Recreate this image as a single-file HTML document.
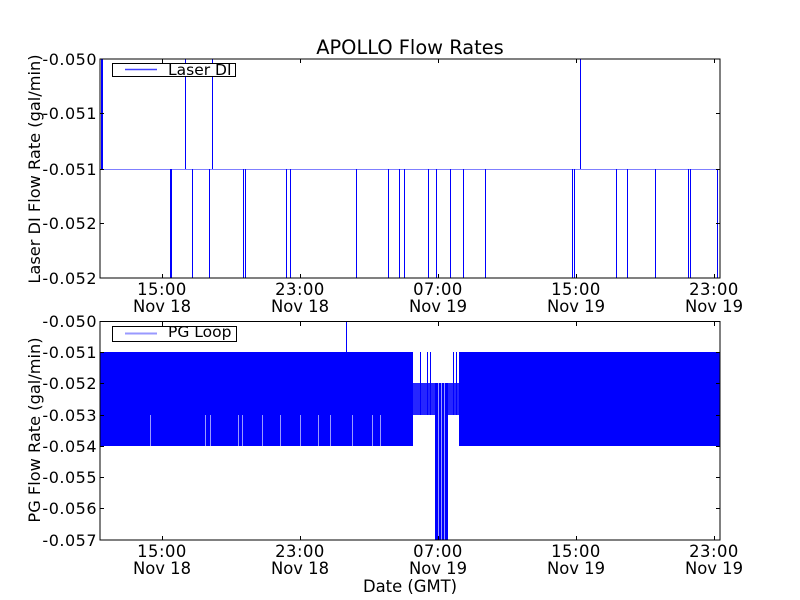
<!DOCTYPE html>
<html><head><meta charset="utf-8"><style>
html,body{margin:0;padding:0;background:#fff;}
svg{display:block;font-family:"DejaVu Sans","Liberation Sans",sans-serif;}
.n{letter-spacing:0.5px;}
</style></head><body>
<svg width="800" height="600" viewBox="0 0 800 600" xmlns="http://www.w3.org/2000/svg">
<rect width="800" height="600" fill="#fff"/>
<text x="410" y="54" font-size="19.4" text-anchor="middle">APOLLO Flow Rates</text>

<!-- TOP AXES -->
<g stroke="#0000ff" stroke-width="1" fill="none">
<line x1="100" y1="169.5" x2="720" y2="169.5" stroke="#7f7fff"/>
<path d="M101.5 169V59M102.5 169V59M185.5 169V59M212.5 169V59M580.5 169V59"/>
<path d="M170.5 169V278M171.5 169V278M192.5 169V278M209.5 169V278M243.5 169V278M245.5 169V278M286.5 169V278M290.5 169V278M356.5 169V278M388.5 169V278M399.5 169V278M404.5 169V278M428.5 169V278M436.5 169V278M450.5 169V278M463.5 169V278M485.5 169V278M572.5 169V278M574.5 169V278M616.5 169V278M627.5 169V278M655.5 169V278M688.5 169V278M690.5 169V278M717.5 169V278"/>
</g>
<rect x="100" y="59" width="620" height="219" fill="none" stroke="#000" stroke-width="1"/>
<g stroke="#000" stroke-width="1">
<path d="M100 113.5h4M100 169.5h4M100 223.5h4M716 113.5h4M716 169.5h4M716 223.5h4"/>
<path d="M162.5 278v-4M300.5 278v-4M438.5 278v-4M576.5 278v-4M714.5 278v-4M162.5 59v4M300.5 59v4M438.5 59v4M576.5 59v4M714.5 59v4"/>
</g>
<rect x="112.5" y="63.5" width="123" height="13" fill="#fff" stroke="#000"/>
<line x1="125" y1="69.5" x2="157" y2="69.5" stroke="#4040ff" stroke-width="1.5"/>
<text x="168" y="75" font-size="15.5">Laser DI</text>
<g font-size="16" text-anchor="end" class="n">
<text x="97" y="65">-0.050</text>
<text x="97" y="119">-0.051</text>
<text x="97" y="175">-0.051</text>
<text x="97" y="229">-0.052</text>
<text x="97" y="284">-0.052</text>
</g>
<g font-size="16.4" text-anchor="middle">
<text x="162" y="295" class="n">15:00</text><text x="162" y="312">Nov 18</text>
<text x="300" y="295" class="n">23:00</text><text x="300" y="312">Nov 18</text>
<text x="438" y="295" class="n">07:00</text><text x="438" y="312">Nov 19</text>
<text x="576" y="295" class="n">15:00</text><text x="576" y="312">Nov 19</text>
<text x="714" y="295" class="n">23:00</text><text x="714" y="312">Nov 19</text>
</g>
<text transform="translate(40,169) rotate(-90)" font-size="16.2" text-anchor="middle">Laser DI Flow Rate (gal/min)</text>

<!-- BOTTOM AXES -->
<g fill="#0000ff">
<rect x="100" y="352" width="313" height="94"/>
<rect x="459" y="352" width="261" height="94"/>
<rect x="413" y="383" width="46" height="32" opacity="0.85"/>
<rect x="435" y="383" width="13" height="157"/>
</g>
<g stroke="#fff" stroke-width="0.6">
<path d="M150.5 415v31M205.5 415v31M210.5 415v31M238.5 415v31M242.5 415v31M262.5 415v31M280.5 415v31M300.5 415v31M318.5 415v31M330.5 415v31M352.5 415v31M372.5 415v31M380.5 415v31"/>
<path d="M438.5 383v157M441.5 383v157M444.5 383v157"/>
</g>
<g stroke="#0000ff" stroke-width="1">
<path d="M346.5 352V321M420.5 352v63M427.5 352v63M430.5 352v63M453.5 352v63M456.5 352v63"/>
</g>
<rect x="100" y="321.5" width="620" height="218.5" fill="none" stroke="#000" stroke-width="1"/>
<g stroke="#000" stroke-width="1">
<path d="M100 352.5h4M100 383.5h4M100 415.5h4M100 446.5h4M100 477.5h4M100 508.5h4M716 352.5h4M716 383.5h4M716 415.5h4M716 446.5h4M716 477.5h4M716 508.5h4"/>
<path d="M162.5 540v-4M300.5 540v-4M438.5 540v-4M576.5 540v-4M714.5 540v-4M162.5 322v4M300.5 322v4M438.5 322v4M576.5 322v4M714.5 322v4"/>
</g>
<rect x="112.5" y="326.5" width="124" height="15" fill="#fff" stroke="#000"/>
<line x1="125" y1="333.5" x2="157" y2="333.5" stroke="#9999ff" stroke-width="2"/>
<text x="168" y="337" font-size="15.5">PG Loop</text>
<g font-size="16" text-anchor="end" class="n">
<text x="97" y="327">-0.050</text>
<text x="97" y="358">-0.051</text>
<text x="97" y="389">-0.052</text>
<text x="97" y="421">-0.053</text>
<text x="97" y="452">-0.054</text>
<text x="97" y="483">-0.055</text>
<text x="97" y="514">-0.056</text>
<text x="97" y="546">-0.057</text>
</g>
<g font-size="16.4" text-anchor="middle">
<text x="162" y="557" class="n">15:00</text><text x="162" y="574">Nov 18</text>
<text x="300" y="557" class="n">23:00</text><text x="300" y="574">Nov 18</text>
<text x="438" y="557" class="n">07:00</text><text x="438" y="574">Nov 19</text>
<text x="576" y="557" class="n">15:00</text><text x="576" y="574">Nov 19</text>
<text x="714" y="557" class="n">23:00</text><text x="714" y="574">Nov 19</text>
</g>
<text x="410" y="592" font-size="16.4" text-anchor="middle">Date (GMT)</text>
<text transform="translate(40,430) rotate(-90)" font-size="16.2" text-anchor="middle">PG Flow Rate (gal/min)</text>
</svg>
</body></html>
